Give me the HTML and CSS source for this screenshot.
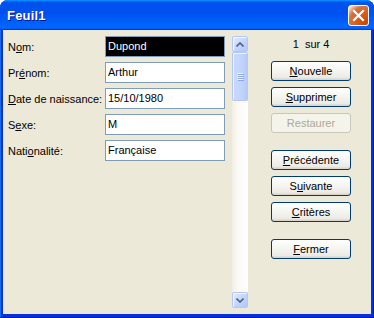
FILE: index.html
```html
<!DOCTYPE html>
<html>
<head>
  <meta charset="utf-8" />
	<title>Feuil1</title>
	<link rel="stylesheet" href="styles.css">
</head>
<body>

<div class='window'>
	<div class='titlebar'>
		<span class='title'>Feuil1</span>
		<span class='close'>
			<svg width="13" height="13" viewBox="0 0 13 13"><path d="M2 2 L11 11 M11 2 L2 11" stroke="#fff" stroke-width="2.2" stroke-linecap="square" fill="none"/></svg>
		</span>
	</div>

	<div class='client'>
		<!-- champs -->
		<div class='fields'>
			<div class='field'>
				<label>N<u>o</u>m:</label>
				<div class='box sel'>Dupond</div>
			</div>
			<div class='field'>
				<label>Pr<u>é</u>nom:</label>
				<div class='box'>Arthur</div>
			</div>
			<div class='field'>
				<label><u>D</u>ate de naissance:</label>
				<div class='box'>15/10/1980</div>
			</div>
			<div class='field'>
				<label>S<u>e</u>xe:</label>
				<div class='box'>M</div>
			</div>
			<div class='field'>
				<label>Nati<u>o</u>nalité:</label>
				<div class='box'>Française</div>
			</div>
		</div>

		<!-- barre de défilement -->
		<div class='scrollbar'>
			<div class='sb-btn'>
				<svg width="8" height="5" viewBox="0 0 8 5"><path d="M0.5 4.5 L4 1 L7.5 4.5" stroke="#4d6185" stroke-width="1.6" fill="none"/></svg>
			</div>
			<div class='sb-thumb'>
				<span></span><span></span><span></span><span></span>
			</div>
			<div class='sb-track'></div>
			<div class='sb-btn'>
				<svg width="8" height="5" viewBox="0 0 8 5"><path d="M0.5 0.5 L4 4 L7.5 0.5" stroke="#4d6185" stroke-width="1.6" fill="none"/></svg>
			</div>
		</div>

		<!-- boutons -->
		<div class='actions'>
			<div class='counter'>1&nbsp; sur 4</div>
			<div class='btn'><u>N</u>ouvelle</div>
			<div class='btn'><u>S</u>upprimer</div>
			<div class='btn disabled'>Restaurer</div>
			<div class='btn sep'><u>P</u>récédente</div>
			<div class='btn'>S<u>u</u>ivante</div>
			<div class='btn'><u>C</u>ritères</div>
			<div class='btn sep'><u>F</u>ermer</div>
		</div>
	</div>
</div>

</body>
</html>
```

FILE: styles.css
```css
	*{margin:0;padding:0;box-sizing:border-box;}
	body{
		background:#fff;
		font-family:"Liberation Sans", Arial, sans-serif;
		font-size:11px;
		color:#000;
		overflow:hidden;
	}
	u{
		text-decoration:underline;
		text-underline-offset:1px;
	}
	.window{
		width:374px;
		height:318px;
		display:flex;
		flex-direction:column;
		background:#0831d9;
		border-radius:8px 8px 0 0;
		box-shadow:inset -1px -1px #001ea0, inset 1px 0 #166aee;
	}
	.titlebar{
		height:30px;
		display:flex;
		align-items:center;
		justify-content:space-between;
		padding:0 5px 0 7px;
		border-radius:8px 8px 0 0;
		background:linear-gradient(180deg,#0997ff,#0053ee 8%,#0050ee 40%,#0066ff 88%,#0066ff 93%,#005bff 95%,#003dd7 96%,#003dd7);
	}
	.title{
		color:#fff;
		font-weight:bold;
		font-size:13px;
		letter-spacing:0.2px;
		text-shadow:1px 1px #0f1089;
	}
	.close{
		width:21px;
		height:21px;
		display:flex;
		align-items:center;
		justify-content:center;
		border:1px solid #fff;
		border-radius:3px;
		background:radial-gradient(circle at 90% 90%,#cc4600 0%,#dc6527 55%,#cd7546 70%,#ffccb2 90%,#fff 100%);
	}
	.client{
		flex:1;
		margin:0 3px 4px 3px;
		background:#ece9d8;
		display:flex;
		padding:6px 0 6px 0;
	}
	.fields{
		padding-left:5px;
		display:flex;
		flex-direction:column;
		gap:5px;
	}
	.field{
		display:flex;
		align-items:center;
		height:21px;
	}
	.field label{
		width:97px;
	}
	.box{
		width:120px;
		height:21px;
		border:1px solid #7f9db9;
		background:#fff;
		padding:0 0 0 2px;
		line-height:19px;
	}
	.box.sel{
		background:#000;
		color:#fff;
	}
	.scrollbar{
		width:16px;
		margin-left:7px;
		display:flex;
		flex-direction:column;
	}
	.sb-btn{
		height:16px;
		display:flex;
		align-items:center;
		justify-content:center;
		border:1px solid #b4c8f6;
		border-radius:2px;
		background:linear-gradient(135deg,#e3ebfe,#c1d3fb 60%,#b3c7f8);
		box-shadow:inset 1px 1px #f2f6ff;
	}
	.sb-thumb{
		height:49px;
		display:flex;
		flex-direction:column;
		align-items:center;
		justify-content:center;
		gap:1px;
		border:1px solid #b4c8f6;
		border-radius:2px;
		background:linear-gradient(90deg,#c9d8fc,#c3d4fc 60%,#b6c9f8);
		box-shadow:inset 1px 1px #eef3ff;
	}
	.sb-thumb span{
		display:block;
		width:6px;
		height:1px;
		background:#eef4fe;
		box-shadow:1px 1px #8ca6e6;
	}
	.sb-track{
		flex:1;
		background:linear-gradient(90deg,#f1efe6,#fbfaf6 40%,#fefefe);
	}
	.actions{
		flex:1;
		padding-left:3px;
		display:flex;
		flex-direction:column;
		align-items:center;
	}
	.counter{
		height:25px;
		padding-top:1px;
		line-height:14px;
	}
	.btn{
		width:80px;
		height:20px;
		margin-bottom:6px;
		line-height:18px;
		text-align:center;
		border:1px solid #003c74;
		border-radius:3px;
		background:linear-gradient(180deg,#fff,#f4f4f0 50%,#ecebe6 85%,#d6d0c5);
	}
	.btn.sep{
		margin-top:11px;
	}
	.btn.disabled{
		color:#aca899;
		border-color:#c9c7ba;
		background:#f5f4ea;
	}
```
